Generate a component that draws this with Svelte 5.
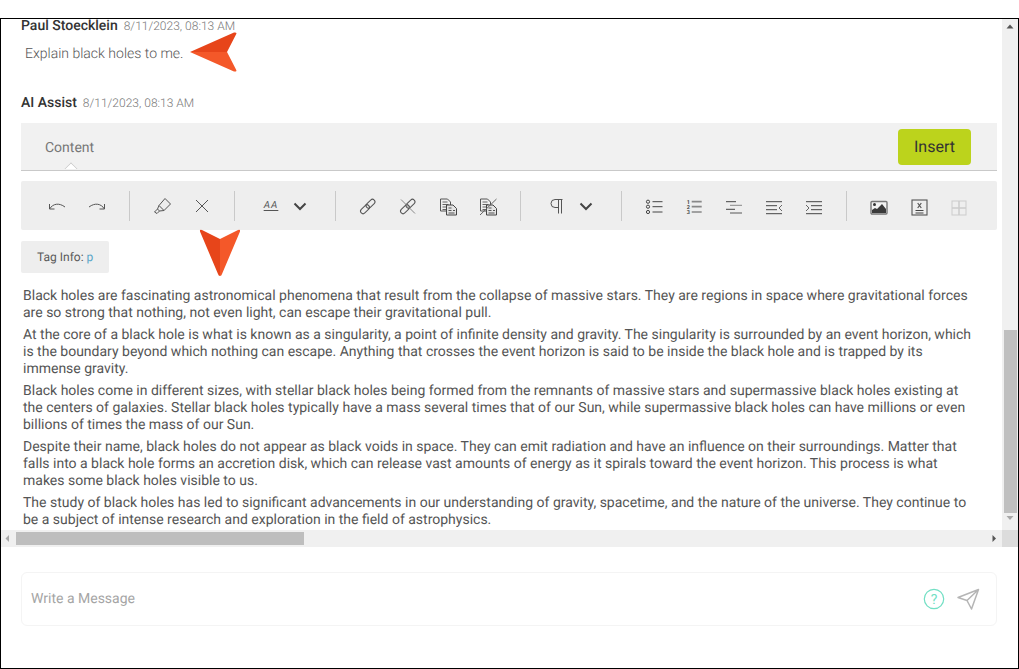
<script>
  const paragraphs = [
    "Black holes are fascinating astronomical phenomena that result from the collapse of massive stars. They are regions in space where gravitational forces are so strong that nothing, not even light, can escape their gravitational pull.",
    "At the core of a black hole is what is known as a singularity, a point of infinite density and gravity. The singularity is surrounded by an event horizon, which is the boundary beyond which nothing can escape. Anything that crosses the event horizon is said to be inside the black hole and is trapped by its immense gravity.",
    "Black holes come in different sizes, with stellar black holes being formed from the remnants of massive stars and supermassive black holes existing at the centers of galaxies. Stellar black holes typically have a mass several times that of our Sun, while supermassive black holes can have millions or even billions of times the mass of our Sun.",
    "Despite their name, black holes do not appear as black voids in space. They can emit radiation and have an influence on their surroundings. Matter that falls into a black hole forms an accretion disk, which can release vast amounts of energy as it spirals toward the event horizon. This process is what makes some black holes visible to us.",
    "The study of black holes has led to significant advancements in our understanding of gravity, spacetime, and the nature of the universe. They continue to be a subject of intense research and exploration in the field of astrophysics."
  ];
</script>

{#snippet chevron()}
  <span class="btn caret"><svg width="18" height="24" viewBox="0 0 18 24"><path d="M3.500 9.500 9 15l5.500-5.500" fill="none" stroke="#444" stroke-width="2"/></svg></span>
{/snippet}

{#snippet chain()}
  <rect x="12" y="4.500" width="5" height="10.500" rx="2.500" transform="rotate(45 14.500 9.750)"/>
  <rect x="6.500" y="10" width="5" height="10.500" rx="2.500" transform="rotate(45 9 15.250)"/>
{/snippet}

{#snippet docs()}
  <path d="M11 17H4.500V5h7l3 3v3" stroke="#555"/>
  <path d="M6.500 8h5M6.500 10.500h6M6.500 13h4M6.500 15.500h4" stroke="#666"/>
  <path d="M10.500 11h6.500l3.500 3.500V21H10.500z" fill="#e4e4e4" stroke="#444"/>
  <path d="M12.500 14h3M12.500 16.500h3M12.500 19h6M17 16.500h2" stroke="#555"/>
{/snippet}

<div class="frame">
  <div class="viewport">
    <div class="scroll">
      <div class="meta"><strong>Paul Stoecklein</strong><span>8/11/2023, 08:13 AM</span></div>
      <p class="question">Explain black holes to me.</p>
      <div class="meta second"><strong>AI Assist</strong><span>8/11/2023, 08:13 AM</span></div>

      <div class="tabbar">
        <span class="tab">Content</span>
        <span class="insert">Insert</span>
      </div>

      <div class="toolbar">
        <span class="btn"><svg viewBox="0 0 24 24"><path d="M4.500 10v5h5M4.500 15C8 9.500 14 8.500 20 13"/></svg></span>
        <span class="btn"><svg viewBox="0 0 24 24"><path d="M19.500 10v5h-5M19.500 15C16 9.500 10 8.500 4 13"/></svg></span>
        <i class="sep"></i>
        <span class="btn"><svg viewBox="0 0 24 24"><path d="M15 4.500 20.500 10 14 16.500 9 11.500zM9 11.500 7.500 15l2 2 4.500-.5M7.500 15 4.500 18l2.500 1.500 2.500-2.500"/></svg></span>
        <span class="btn"><svg viewBox="0 0 24 24"><path d="M6 6l12 12M18 6 6 18"/></svg></span>
        <i class="sep"></i>
        <span class="btn aa"><span class="aatext">AA</span></span>
        {@render chevron()}
        <i class="sep"></i>
        <span class="btn"><svg viewBox="0 0 24 24">{@render chain()}</svg></span>
        <span class="btn"><svg viewBox="0 0 24 24">{@render chain()}<path d="M5 5.500l14 14" stroke="#888"/></svg></span>
        <span class="btn"><svg viewBox="0 0 24 24">{@render docs()}</svg></span>
        <span class="btn"><svg viewBox="0 0 24 24">{@render docs()}<path d="M4 21 20.500 5" stroke="#666"/></svg></span>
        <i class="sep"></i>
        <span class="btn aa"><svg viewBox="0 0 24 24"><path d="M16.500 5.500v14M13.500 5.500v14M17.500 5.500H10a4 4 0 0 0 0 8h3.500"/></svg></span>
        {@render chevron()}
        <i class="sep"></i>
        <span class="btn"><svg viewBox="0 0 24 24"><circle cx="6" cy="7.700" r="1.600" stroke="#444"/><circle cx="6" cy="12.700" r="1.600" stroke="#444"/><circle cx="6" cy="18" r="1.600" stroke="#444"/><path d="M10.500 7.700h10M10.500 12.700h10M10.500 18h10" stroke="#444"/></svg></span>
        <span class="btn"><svg viewBox="0 0 24 24"><text x="4.800" y="9.700" class="num">1</text><text x="4.800" y="15" class="num">2</text><text x="4.800" y="20.300" class="num">3</text><path d="M9.700 7.700h10M9.700 12.700h10M9.700 18h10" stroke="#888" stroke-width="1.700"/></svg></span>
        <span class="btn"><svg viewBox="0 0 24 24"><path d="M4 7.700h10M4 15.300h9" stroke="#444"/><path d="M8 11.300h12" stroke="#888"/><path d="M8 19h12" stroke="#888" stroke-width="1.500"/></svg></span>
        <span class="btn"><svg viewBox="0 0 24 24"><path d="M4 7.700h16M4 11.700h11M4 15.700h11M4 19.700h16" stroke="#444"/><path d="M20 11l-3 3 3 3" stroke="#666"/></svg></span>
        <span class="btn"><svg viewBox="0 0 24 24"><path d="M4 7.700h16M9 11.700h11M9 15.700h11M4 19.700h16" stroke="#444"/><path d="M4 11l3 3-3 3" stroke="#666"/></svg></span>
        <i class="sep"></i>
        <span class="btn"><svg viewBox="0 0 24 24"><rect x="4" y="7.500" width="16" height="12.500" rx="1" fill="#f2f2f2" stroke="#777" stroke-width="1.400"/><circle cx="7.500" cy="10.500" r="1.500" fill="#333" stroke="none"/><path d="M5 19v-3l3-2 2 1 5-5 4 5v4z" fill="#3a3a3a" stroke="none"/></svg></span>
        <span class="btn"><svg viewBox="0 0 24 24"><rect x="5" y="6" width="15" height="15" stroke="#555" stroke-width="1.100"/><path d="M8.500 16.500h8M8.500 19h8" stroke="#444"/><path d="M10.700 9l3.600 5M14.300 9l-3.600 5" stroke="#555" stroke-width="1.200"/></svg></span>
        <span class="btn"><svg viewBox="0 0 24 24"><rect x="5" y="7" width="14" height="14" stroke="#ccc"/><path d="M12 7v14M5 14h14" stroke="#ccc" stroke-width="1.500"/></svg></span>
      </div>

      <div class="taginfo">Tag Info: <span>p</span></div>

      <div class="body">
        {#each paragraphs as text}
          <p>{text}</p>
        {/each}
      </div>
    </div>

    <div class="vbar">
      <svg class="arrow" width="16" height="14" viewBox="0 0 16 14"><path d="M4.500 9.500h7L8 5.500z" fill="#555"/></svg>
      <div class="vthumb"></div>
      <svg class="arrow down" width="16" height="14" viewBox="0 0 16 14"><path d="M4.500 3h7L8 7z" fill="#a8a8a8"/></svg>
    </div>

    <div class="hbar">
      <svg class="arrow" width="15" height="17" viewBox="0 0 15 17"><path d="M8 5v7L4.500 8.500z" fill="#a8a8a8"/></svg>
      <div class="hthumb"></div>
      <svg class="arrow right" width="15" height="17" viewBox="0 0 15 17"><path d="M5.500 5v7L9 8.500z" fill="#555"/></svg>
    </div>
    <div class="corner"></div>
  </div>

  <div class="composer">
    <span class="placeholder">Write a Message</span>
    <svg class="help" width="22" height="22" viewBox="0 0 22 22"><circle cx="11" cy="11" r="9.700" fill="none" stroke="#72dfc4" stroke-width="1.200"/><text x="11" y="16" text-anchor="middle" font-size="14" font-family="Roboto, sans-serif" fill="#72dfc4">?</text></svg>
    <svg class="send" width="24" height="24" viewBox="0 0 24 24"><path d="M2 10.500 22.500 2.500 15.500 22l-4.500-8.500zM11 13.500 22.500 2.500" fill="none" stroke="#b5b5b5" stroke-width="1.500" stroke-linejoin="round"/></svg>
  </div>

  <svg class="pointer left" width="50" height="42" viewBox="0 0 50 42">
    <path d="M1 21 45 1.500Q48.500 1 47 3.500L38 21z" fill="#e7451a"/>
    <path d="M1 21 45 40.500Q48.500 41 47 38.500L38 21z" fill="#f45829"/>
  </svg>
  <svg class="pointer down" width="42" height="48" viewBox="0 0 42 48">
    <path d="M21 47Q19.500 47 19 45L1 2.500Q.5 0 3 1L21 10z" fill="#e7451a"/>
    <path d="M21 47Q22.500 47 23 45L41 2.500Q41.500 0 39 1L21 10z" fill="#f45829"/>
  </svg>
</div>

<style>
  :global(body) {
    margin: 0;
    background: #fff;
    overflow: hidden;
  }
  .frame {
    position: relative;
    box-sizing: border-box;
    margin-top: 18px;
    width: 1019px;
    height: 651px;
    border: 1px solid #000;
    font-family: Roboto, "Liberation Sans", sans-serif;
    text-rendering: geometricPrecision;
    color: #555;
    background: #fff;
  }
  .viewport {
    display: grid;
    grid-template-columns: 1001px 16px;
    grid-template-rows: 511px 17px;
  }
  .scroll {
    overflow: hidden;
    padding: 0 5px 0 20px;
    box-sizing: border-box;
  }
  .meta {
    display: flex;
    align-items: baseline;
    gap: 6px;
    font-size: 12px;
    font-weight: 300;
    color: #777;
    line-height: 14px;
  }
  .meta strong {
    font-size: 14px;
    font-weight: 500;
    color: #333;
  }
  .question {
    margin: 13px 0 0 4px;
    font-size: 14px;
    font-weight: 300;
    line-height: 17px;
    color: #555;
  }
  .second { margin-top: 33px; }
  .tabbar {
    display: flex;
    align-items: center;
    justify-content: space-between;
    box-sizing: border-box;
    height: 48px;
    margin-top: 13px;
    padding: 0 26px 0 24px;
    background: #f1f1f1;
    border-bottom: 1px solid #c9c9c9;
    position: relative;
  }
  .tabbar::after {
    content: "";
    position: absolute;
    left: 45px;
    bottom: -4px;
    width: 9px;
    height: 9px;
    background: #fff;
    border-left: 1px solid #c9c9c9;
    border-top: 1px solid #c9c9c9;
    transform: rotate(45deg);
    clip-path: polygon(0 0, 100% 0, 0 100%);
  }
  .tab {
    padding-top: 2px;
    font-size: 14px;
    color: #777;
  }
  .insert {
    display: flex;
    align-items: center;
    justify-content: center;
    width: 73px;
    height: 36px;
    background: #bcd31c;
    border-radius: 4px;
    color: #333;
    font-size: 16px;
  }
  .toolbar {
    display: flex;
    align-items: center;
    box-sizing: border-box;
    height: 49px;
    margin-top: 10px;
    padding-left: 16px;
    background: #eee;
    border-radius: 2px;
  }
  .btn {
    display: flex;
    align-items: center;
    justify-content: center;
    flex: none;
    width: 40px;
    height: 24px;
  }
  .btn svg {
    width: 24px;
    height: 24px;
    fill: none;
    stroke: #555;
    stroke-width: 1;
  }
  .btn.caret {
    width: 18px;
    margin-right: 14px;
  }
  .btn.caret svg {
    width: 18px;
    stroke: none;
  }
  .btn.aa { margin-left: 4px; }
  .aatext {
    font-size: 10px;
    font-style: italic;
    color: #555;
    letter-spacing: 1px;
    text-decoration: underline;
    text-underline-offset: 2px;
  }
  .num {
    font-size: 5.500px;
    font-weight: 700;
    fill: #444;
    stroke: none;
  }
  .sep {
    flex: none;
    width: 1px;
    height: 30px;
    margin: 0 12px;
    background: #c9c9c9;
  }
  .taginfo {
    display: flex;
    align-items: center;
    gap: 3px;
    box-sizing: border-box;
    width: 88px;
    height: 32px;
    margin-top: 11px;
    padding-left: 16px;
    background: #eee;
    border-radius: 2px;
    font-size: 12px;
    color: #5a5a5a;
  }
  .taginfo span { color: #5aa6c8; }
  .body {
    margin-top: 15px;
    padding-left: 2px;
    width: 952px;
    font-size: 14px;
    line-height: 17px;
    color: #555;
  }
  .body p { margin: 0 0 5px; }
  .vbar {
    display: flex;
    flex-direction: column;
    background: #f0f0f0;
  }
  .arrow { flex: none; display: block; }
  .vthumb {
    width: 13px;
    height: 183px;
    margin: 297px 0 0 2px;
    background: #c0c0c0;
  }
  .hbar {
    display: flex;
    align-items: center;
    background: #f0f0f0;
  }
  .hthumb {
    width: 288px;
    height: 13px;
    background: #bebebe;
  }
  .arrow.right { margin-left: auto; }
  .corner { background: #dcdcdc; }
  .composer {
    display: flex;
    align-items: center;
    box-sizing: border-box;
    height: 54px;
    margin: 25px 21px 0 20px;
    padding: 0 16px 0 9px;
    border: 1px solid #f4f4f4;
    border-radius: 6px;
  }
  .placeholder {
    flex: 1;
    font-size: 14px;
    color: #a5a5a5;
  }
  .help { margin-right: 11px; }
  .pointer { position: absolute; }
  .pointer.left { left: 188px; top: 12px; }
  .pointer.down { left: 198px; top: 210px; }
</style>
